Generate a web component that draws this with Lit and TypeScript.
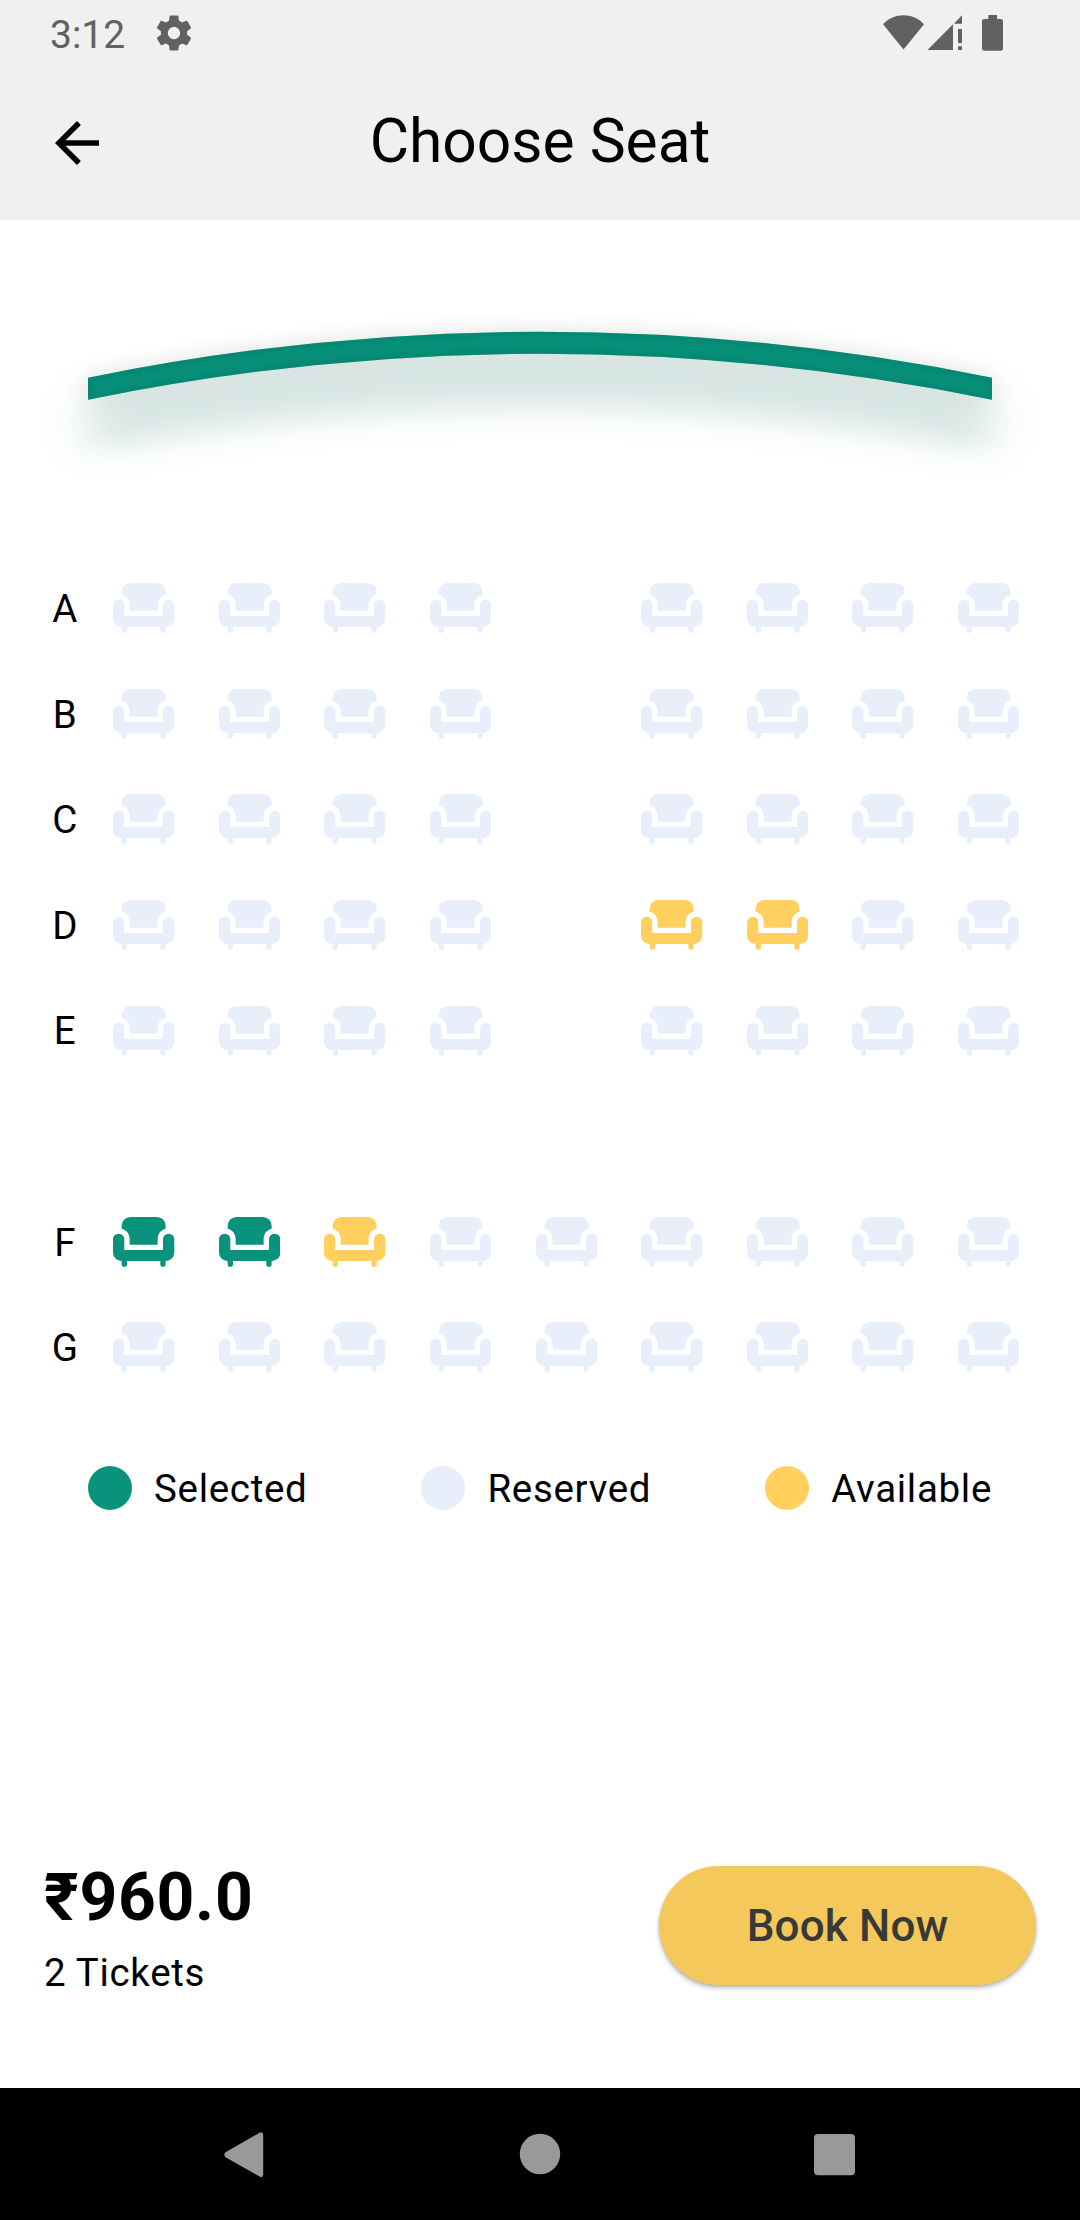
import { LitElement, html, css } from "lit";
import { customElement, property } from "lit/decorators.js";
import { classMap } from "lit/directives/class-map.js";

type SeatState = "reserved" | "available" | "selected";

const CODES: Record<string, SeatState> = { r: "reserved", a: "available", s: "selected" };

// One character per column: r reserved, a available, s selected, "." aisle
const ROWS: Array<{ label: string; seats: string }> = [
  { label: "A", seats: "rrrr.rrrr" },
  { label: "B", seats: "rrrr.rrrr" },
  { label: "C", seats: "rrrr.rrrr" },
  { label: "D", seats: "rrrr.aarr" },
  { label: "E", seats: "rrrr.rrrr" },
  { label: "", seats: "........." },
  { label: "F", seats: "ssarrrrrr" },
  { label: "G", seats: "rrrrrrrrr" },
];

@customElement("seat-icon")
class SeatIcon extends LitElement {
  @property() state: SeatState = "reserved";

  static styles = css`
    :host { display: block; width: 61.3px; height: 50px; }
    .seat { display: block; width: 61.3px; height: 50px; }
    .reserved { fill: #e8eefa; }
    .available { fill: #ffd05e; }
    .selected { fill: #09937d; }
  `;

  render() {
    return html`
      <svg class=${classMap({ seat: true, [this.state]: true })} viewBox="0 0 184 150">
        <path d="M52 0H132A26 26 0 0 1 158 26V35.5C143 39 134 52 134 67V83H50V67C50 52 41 39 26 35.5V26A26 26 0 0 1 52 0Z" />
        <path d="M17 50A17 17 0 0 1 34 67V99H150V67A17 17 0 0 1 184 67V107A25 25 0 0 1 159 132H158V141.5A8 8 0 0 1 142 141.5V132H42V141.5A8 8 0 0 1 26 141.5V132H25A25 25 0 0 1 0 107V67A17 17 0 0 1 17 50Z" />
      </svg>
    `;
  }
}

@customElement("status-bar")
class StatusBar extends LitElement {
  static styles = css`
    :host { display: flex; align-items: center; height: 66px; padding: 0 74px 0 50px; box-sizing: border-box; color: #616161; }
    .time { font-size: 39px; line-height: 46px; padding-top: 3px; }
    .gear { width: 42px; height: 42px; margin-left: 28px; fill: currentColor; }
    .tray { width: 124px; height: 66px; margin-left: auto; fill: currentColor; }
  `;

  render() {
    return html`
      <span class="time">3:12</span>
      <svg class="gear" viewBox="0 0 24 24">
        <path d="M19.43 12.98c.04-.32.07-.64.07-.98s-.03-.66-.07-.98l2.11-1.65c.19-.15.24-.42.12-.64l-2-3.46c-.12-.22-.39-.3-.61-.22l-2.49 1c-.52-.4-1.08-.73-1.69-.98l-.38-2.65C14.46 2.18 14.25 2 14 2h-4c-.25 0-.46.18-.49.42l-.38 2.65c-.61.25-1.17.59-1.69.98l-2.49-1c-.23-.09-.49 0-.61.22l-2 3.46c-.13.22-.07.49.12.64l2.11 1.65c-.04.32-.07.65-.07.98s.03.66.07.98l-2.11 1.65c-.19.15-.24.42-.12.64l2 3.46c.12.22.39.3.61.22l2.49-1c.52.4 1.08.73 1.69.98l.38 2.65c.03.24.24.42.49.42h4c.25 0 .46-.18.49-.42l.38-2.65c.61-.25 1.17-.59 1.69-.98l2.49 1c.23.09.49 0 .61-.22l2-3.46c.12-.22.07-.49-.12-.64l-2.11-1.65zM12 15.5c-1.93 0-3.5-1.57-3.5-3.5s1.57-3.5 3.5-3.5 3.5 1.57 3.5 3.5-1.57 3.5-3.5 3.5z" />
      </svg>
      <svg class="tray" viewBox="882 0 124 66">
        <path d="M883 24.3C894 12.2 913 12.2 924 24.3L903.5 49.5Z" />
        <path d="M927.5 50L953 24.3V50Z M954 23.7L962 15.3V23.7Z M958 29H962V43H958Z M958 46.3H962V50H958Z" />
        <path d="M988.3 15H997V19H1000.8A2.3 2.3 0 0 1 1003 21.3V48.5A2.3 2.3 0 0 1 1000.8 50.8H984.2A2.3 2.3 0 0 1 982 48.5V21.3A2.3 2.3 0 0 1 984.2 19H988.3Z" />
      </svg>
    `;
  }
}

@customElement("cinema-screen")
class CinemaScreen extends LitElement {
  static styles = css`
    :host { display: block; width: 1080px; height: 335.4px; }
    .canvas { display: block; width: 1080px; height: 335px; }
    .spot { fill: #1a604f; fill-opacity: 0.16; }
    .ambient { fill: #000; fill-opacity: 0.09; }
    .bar { fill: #078f79; }
    .edge { fill: none; stroke: #047a66; stroke-opacity: 0.55; stroke-width: 6; }
  `;

  render() {
    const shape = "M88 377.7Q540 285.7 992 377.7V399.7Q540 307.7 88 399.7Z";
    return html`
      <svg class="canvas" viewBox="0 220 1080 335">
        <defs>
          <filter id="wide" filterUnits="userSpaceOnUse" x="0" y="220" width="1080" height="335">
            <feGaussianBlur stdDeviation="22 16" />
          </filter>
          <filter id="near" filterUnits="userSpaceOnUse" x="0" y="220" width="1080" height="335">
            <feGaussianBlur stdDeviation="10" />
          </filter>
          <filter id="soft" filterUnits="userSpaceOnUse" x="0" y="220" width="1080" height="335">
            <feGaussianBlur stdDeviation="3" />
          </filter>
          <clipPath id="clip"><path d=${shape} /></clipPath>
        </defs>
        <path class="spot" filter="url(#wide)" d="M88 392Q540 302 992 392V451Q540 363 88 451Z" />
        <path class="ambient" filter="url(#near)" d=${shape} />
        <path class="bar" d=${shape} />
        <g clip-path="url(#clip)"><path class="edge" filter="url(#soft)" d=${shape} /></g>
      </svg>
    `;
  }
}

@customElement("app-root")
class AppRoot extends LitElement {
  static styles = css`
    :host {
      display: flex;
      flex-direction: column;
      width: 1080px;
      height: 2220px;
      overflow: hidden;
      background: #fff;
      color: #000;
      font-family: Roboto, "Liberation Sans", sans-serif;
      font-size: 38.5px;
      line-height: 46px;
    }
    .top { background: #f0f0f0; }
    .appbar { display: grid; grid-template-columns: 154px 1fr 154px; align-items: center; height: 154px; }
    .back { width: 66px; height: 66px; justify-self: center; }
    .title { margin: 0; padding-bottom: 2px; text-align: center; font-size: 60.5px; line-height: 72px; font-weight: 400; }
    .hall { display: grid; grid-template-columns: 101.3px repeat(9, 105.6px); grid-auto-rows: 105.6px; align-items: center; padding-left: 12px; }
    .label { padding: 1.6px 0 0 4.3px; text-align: center; }
    .legend { display: flex; justify-content: space-between; margin: 66px 88px 0; letter-spacing: 0.69px; }
    .item { display: flex; align-items: center; gap: 22px; height: 44px; }
    .name { padding-top: 2px; }
    .dot { width: 44px; height: 44px; border-radius: 50%; }
    .selected { background: #09937d; }
    .reserved { background: #e8eefa; }
    .available { background: #ffd05e; }
    .checkout { display: flex; justify-content: space-between; align-items: center; margin-top: auto; height: 325px; padding: 0 44px; }
    .price { padding-top: 3px; font-size: 66px; line-height: 77px; font-weight: 700; letter-spacing: 0.69px; }
    .count { margin-top: 14px; letter-spacing: 0.69px; }
    .book {
      width: 377px; height: 119px; padding: 0; border: 0; border-radius: 60px;
      background: #f4c85a; color: #373a36;
      font-family: inherit; font-size: 44px; font-weight: 500; letter-spacing: 0.15px;
      box-shadow: 0 3px 5px rgba(0, 0, 0, 0.24), 0 1px 3px rgba(0, 0, 0, 0.12);
    }
    .navbar { height: 132px; background: #000; }
    .keys { display: block; width: 1080px; height: 132px; fill: #999; }
  `;

  render() {
    return html`
      <div class="top">
        <status-bar></status-bar>
        <header class="appbar">
          <svg class="back" viewBox="0 0 24 24">
            <path d="M20 11H7.83l5.59-5.59L12 4l-8 8 8 8 1.41-1.41L7.83 13H20v-2z" />
          </svg>
          <h1 class="title">Choose Seat</h1>
        </header>
      </div>
      <cinema-screen></cinema-screen>
      <div class="hall">
        ${ROWS.map((row) => html`
          <span class="label">${row.label}</span>
          ${[...row.seats].map((code) =>
            code === "." ? html`<span></span>` : html`<seat-icon .state=${CODES[code]}></seat-icon>`)}
        `)}
      </div>
      <div class="legend">
        ${["Selected", "Reserved", "Available"].map((name) => html`
          <div class="item"><span class="dot ${name.toLowerCase()}"></span><span class="name">${name}</span></div>
        `)}
      </div>
      <div class="checkout">
        <div>
          <div class="price">₹960.0</div>
          <div class="count">2 Tickets</div>
        </div>
        <button class="book">Book Now</button>
      </div>
      <nav class="navbar">
        <svg class="keys" viewBox="0 0 1080 132">
          <path d="M225.5 64.3L260 44.5Q263.2 43.5 263.2 47V86.5Q263.2 90 260 88.7L225.5 69.3Q223.2 66.8 225.5 64.3Z" />
          <circle cx="540" cy="66" r="20.2" />
          <rect x="814" y="46" width="41" height="41.3" rx="4" />
        </svg>
      </nav>
    `;
  }
}
